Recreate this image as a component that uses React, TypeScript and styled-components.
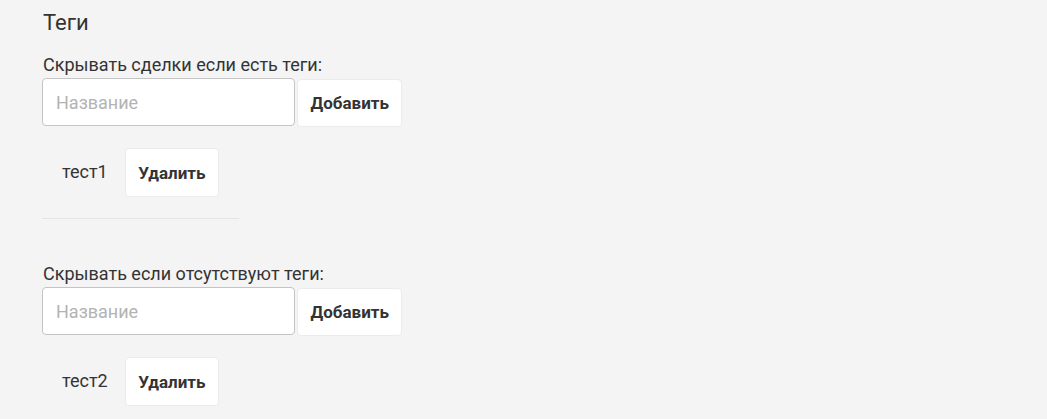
import React from "react";
import styled, { createGlobalStyle } from "styled-components";

const Global = createGlobalStyle`
  html, body { margin: 0; padding: 0; background: #f4f4f4; }
  body { font-family: Roboto, "Open Sans", sans-serif; color: #333; }
  * { box-sizing: border-box; }
`;

const Page = styled.div`
  padding: 8px 42px 0;
  display: flex;
  flex-direction: column;
  align-items: flex-start;
`;

const Title = styled.h3`
  margin: 0 0 16px 1px;
  font-size: 22px;
  font-weight: 400;
  line-height: 30px;
  color: #333;
`;

const Group = styled.div`
  display: flex;
  flex-direction: column;
  align-items: flex-start;
`;

const Label = styled.label`
  font-size: 18px;
  line-height: 22px;
  margin-left: 1px;
  color: #333;
`;

const InputRow = styled.div`
  display: flex;
  align-items: flex-start;
  gap: 2px;
  margin-top: 2px;
`;

const Input = styled.input`
  width: 253px;
  height: 48px;
  padding: 0 13px;
  border: 1px solid #c4c4c4;
  border-radius: 4px;
  background: #fff;
  font-family: inherit;
  font-size: 18px;
  color: #333;
  outline: none;
  &::placeholder { color: #b3b3b3; }
`;

const Button = styled.button<{ $tall?: boolean }>`
  height: ${(p) => (p.$tall ? 49 : 48)}px;
  margin-top: ${(p) => (p.$tall ? 0 : 1)}px;
  padding: 0 12.5px;
  background: #fff;
  border: 1px solid #ebebeb;
  border-radius: 4px;
  font-family: inherit;
  font-size: 17px;
  font-weight: 700;
  color: #333;
  cursor: pointer;
`;

const TagRow = styled.div`
  display: flex;
  align-items: center;
  margin-top: 21px;
  padding-left: 20px;
  gap: 17px;
`;

const TagName = styled.span`
  font-size: 18px;
  line-height: 22px;
  color: #333;
  margin-top: -1px;
`;

const Divider = styled.hr`
  width: 197px;
  margin: 21px 0 44px;
  border: 0;
  border-top: 1px solid #e4e4e4;
`;

function TagBlock({ label, tags, divider }: { label: string; tags: string[]; divider?: boolean }) {
  return (
    <Group>
      <Label>{label}</Label>
      <InputRow>
        <Input placeholder="Название" />
        <Button>Добавить</Button>
      </InputRow>
      {tags.map((t) => (
        <TagRow key={t}>
          <TagName>{t}</TagName>
          <Button $tall>Удалить</Button>
        </TagRow>
      ))}
      {divider && <Divider />}
    </Group>
  );
}

export default function App() {
  return (
    <>
      <Global />
      <Page>
        <Title>Теги</Title>
        <TagBlock label="Скрывать сделки если есть теги:" tags={["тест1"]} divider />
        <TagBlock label="Скрывать если отсутствуют теги:" tags={["тест2"]} />
      </Page>
    </>
  );
}
